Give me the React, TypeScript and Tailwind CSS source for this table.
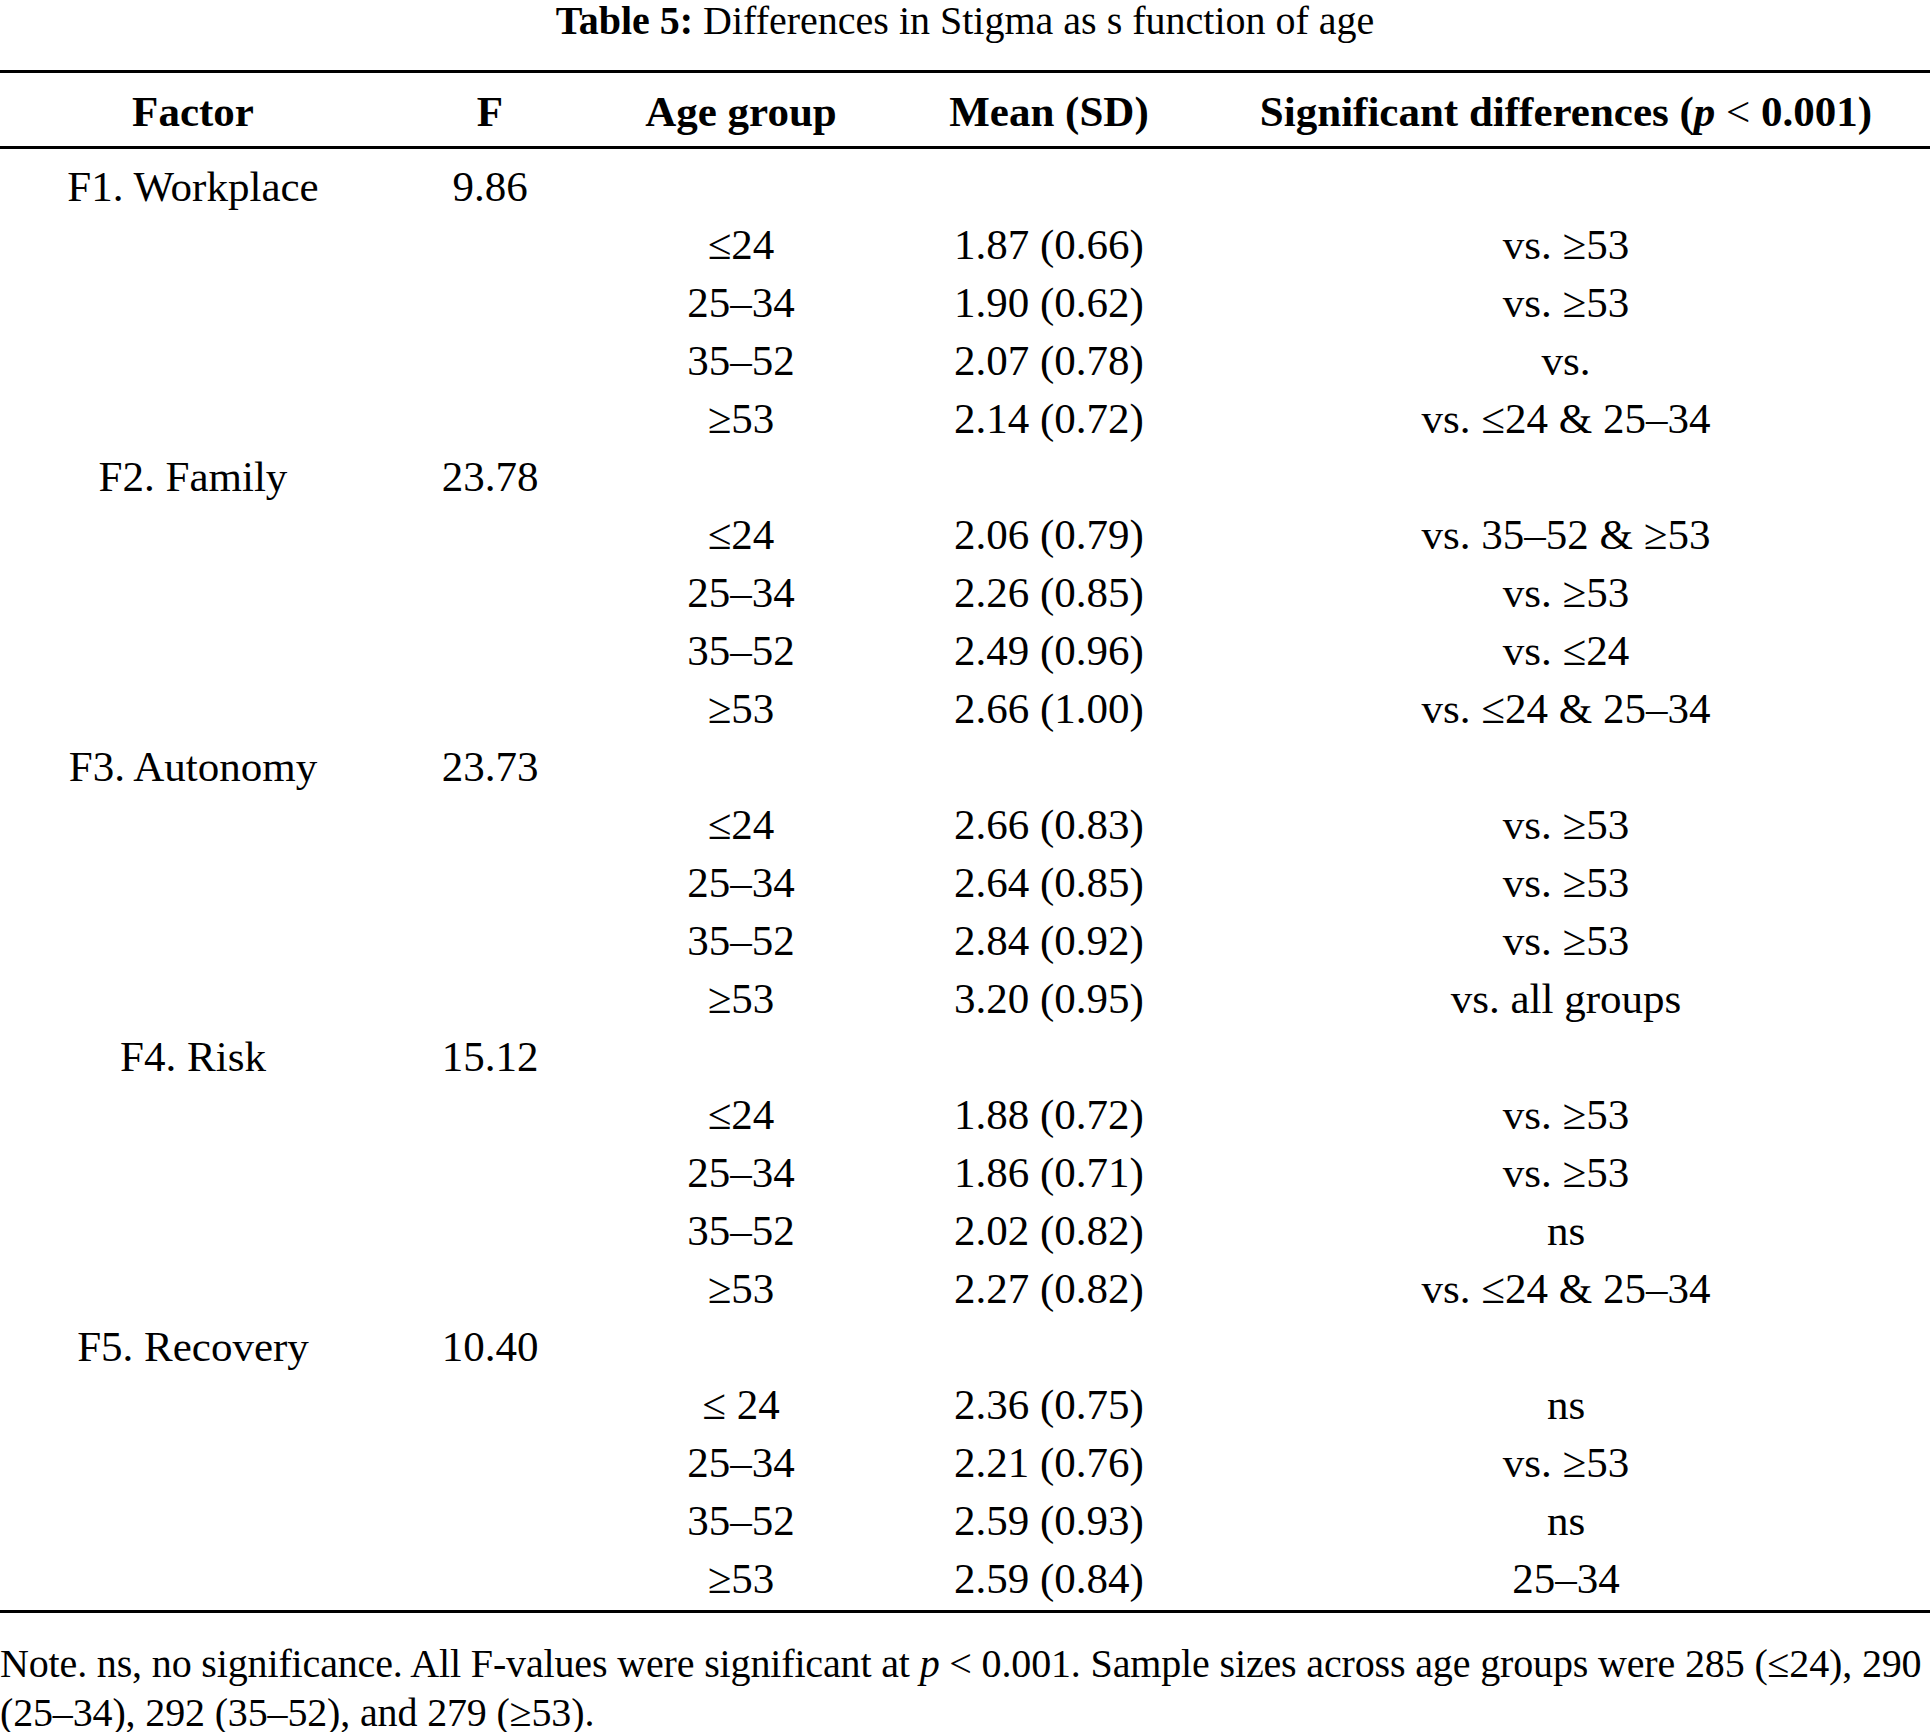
const serif = { fontFamily: '"Liberation Serif", "DejaVu Serif", serif' };

type Row = { age: string; mean: string; diff: string };
type Factor = { name: string; f: string; rows: Row[] };

const factors: Factor[] = [
  {
    name: "F1. Workplace",
    f: "9.86",
    rows: [
      { age: "≤24", mean: "1.87 (0.66)", diff: "vs. ≥53" },
      { age: "25–34", mean: "1.90 (0.62)", diff: "vs. ≥53" },
      { age: "35–52", mean: "2.07 (0.78)", diff: "vs." },
      { age: "≥53", mean: "2.14 (0.72)", diff: "vs. ≤24 & 25–34" },
    ],
  },
  {
    name: "F2. Family",
    f: "23.78",
    rows: [
      { age: "≤24", mean: "2.06 (0.79)", diff: "vs. 35–52 & ≥53" },
      { age: "25–34", mean: "2.26 (0.85)", diff: "vs. ≥53" },
      { age: "35–52", mean: "2.49 (0.96)", diff: "vs. ≤24" },
      { age: "≥53", mean: "2.66 (1.00)", diff: "vs. ≤24 & 25–34" },
    ],
  },
  {
    name: "F3. Autonomy",
    f: "23.73",
    rows: [
      { age: "≤24", mean: "2.66 (0.83)", diff: "vs. ≥53" },
      { age: "25–34", mean: "2.64 (0.85)", diff: "vs. ≥53" },
      { age: "35–52", mean: "2.84 (0.92)", diff: "vs. ≥53" },
      { age: "≥53", mean: "3.20 (0.95)", diff: "vs. all groups" },
    ],
  },
  {
    name: "F4. Risk",
    f: "15.12",
    rows: [
      { age: "≤24", mean: "1.88 (0.72)", diff: "vs. ≥53" },
      { age: "25–34", mean: "1.86 (0.71)", diff: "vs. ≥53" },
      { age: "35–52", mean: "2.02 (0.82)", diff: "ns" },
      { age: "≥53", mean: "2.27 (0.82)", diff: "vs. ≤24 & 25–34" },
    ],
  },
  {
    name: "F5. Recovery",
    f: "10.40",
    rows: [
      { age: "≤ 24", mean: "2.36 (0.75)", diff: "ns" },
      { age: "25–34", mean: "2.21 (0.76)", diff: "vs. ≥53" },
      { age: "35–52", mean: "2.59 (0.93)", diff: "ns" },
      { age: "≥53", mean: "2.59 (0.84)", diff: "25–34" },
    ],
  },
];

const cols = "grid grid-cols-[386px_208px_294px_322px_712px] items-center text-center";

function Cells({ a, b, c, d, e }: { a?: string; b?: string; c?: string; d?: string; e?: string }) {
  return (
    <div className={`${cols} h-[58px]`}>
      <div>{a}</div>
      <div>{b}</div>
      <div>{c}</div>
      <div>{d}</div>
      <div>{e}</div>
    </div>
  );
}

export default function App() {
  return (
    <div className="w-[1930px] bg-white text-black text-[43px] leading-[49px]" style={serif}>
      <div className="h-[70px] pt-[1px] text-center text-[40px] leading-[40px]">
        <span className="font-bold">Table 5:</span> Differences in Stigma as s function of age
      </div>
      <div className="border-t-[3px] border-black" />
      <div className={`${cols} h-[73px] pt-[4px] font-bold`}>
        <div>Factor</div>
        <div>F</div>
        <div>Age group</div>
        <div>Mean (SD)</div>
        <div>
          Significant differences (<i>p</i> <span className="font-normal">&lt;</span> 0.001)
        </div>
      </div>
      <div className="border-t-[3px] border-black" />
      <div className="pt-[8px] pb-[3px]">
        {factors.map((fac) => (
          <div key={fac.name}>
            <Cells a={fac.name} b={fac.f} />
            {fac.rows.map((r, i) => (
              <Cells key={i} c={r.age} d={r.mean} e={r.diff} />
            ))}
          </div>
        ))}
      </div>
      <div className="border-t-[3px] border-black" />
      <p className="pt-[26px] text-[40px] tracking-[-0.15px] whitespace-nowrap">
        Note. ns, no significance. All F-values were significant at <i>p</i> &lt; 0.001. Sample sizes across age
        groups were 285 (≤24), 290
        <br />
        (25–34), 292 (35–52), and 279 (≥53).
      </p>
    </div>
  );
}
